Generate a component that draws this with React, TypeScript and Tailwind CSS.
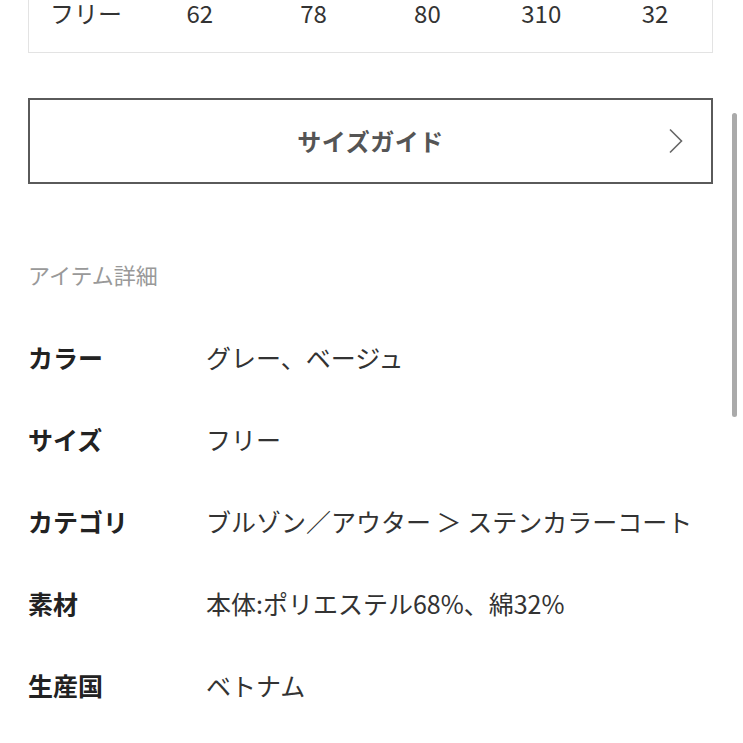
import React from "react";

const font = { fontFamily: '"Noto Sans CJK JP", "Noto Sans", sans-serif' };

const sizes = ["フリー", "62", "78", "80", "310", "32"];

const details: [string, string][] = [
  ["カラー", "グレー、ベージュ"],
  ["サイズ", "フリー"],
  ["カテゴリ", "ブルゾン／アウター ＞ ステンカラーコート"],
  ["素材", "本体:ポリエステル68%、綿32%"],
  ["生産国", "ベトナム"],
];

export default function App() {
  return (
    <div className="relative w-[743px] h-[743px] overflow-hidden bg-white" style={font}>
      <div className="pl-[28px] pr-[30px]">
        <div className="-mt-[27px] h-[80px] grid grid-cols-6 items-center border-l border-r border-b border-[#e3e3e3] text-[24px] text-[#333] leading-[24px]">
          {sizes.map((s, i) => (
            <div key={i} className="text-center">
              {s}
            </div>
          ))}
        </div>

        <div className="relative mt-[45px] h-[86px] border-2 border-[#5a5a5a] flex items-center justify-center">
          <span className="text-[24px] font-bold text-[#555] tracking-[0.5px]">サイズガイド</span>
          <svg
            className="absolute right-[27px] top-[28px]"
            width="16"
            height="26"
            viewBox="0 0 16 26"
            fill="none"
          >
            <path d="M2 1.5 L13.5 13 L2 24.5" stroke="#666" strokeWidth="1.6" />
          </svg>
        </div>

        <div className="mt-[75px] text-[22px] leading-[30px] text-[#999]">アイテム詳細</div>

        <div className="mt-[28px]">
          {details.map(([k, v]) => (
            <div key={k} className="h-[82px] flex items-center">
              <div className="w-[178px] text-[25px] font-bold text-[#222]">{k}</div>
              <div className="text-[25px] text-[#333]">{v}</div>
            </div>
          ))}
        </div>
      </div>

      <div className="absolute left-[732px] top-[113px] w-[5px] h-[304px] rounded-full bg-[#aaa]" />
    </div>
  );
}
